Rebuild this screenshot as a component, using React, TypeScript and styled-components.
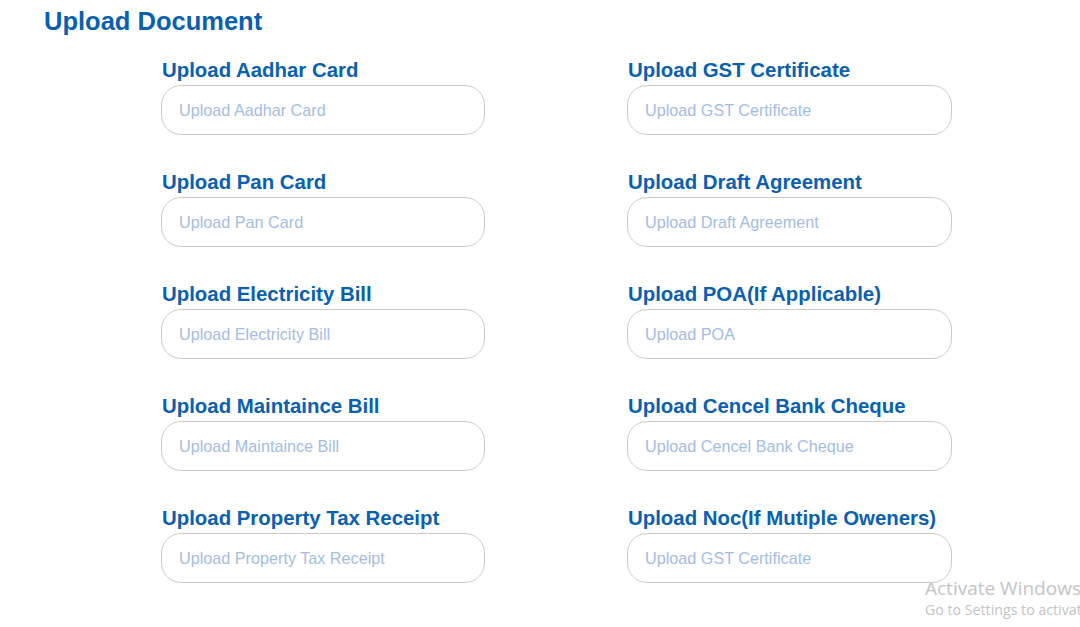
// npm
import React from 'react';
import styled, { createGlobalStyle } from 'styled-components';

// data
const fields = [
	{ label: 'Upload Aadhar Card', placeholder: 'Upload Aadhar Card' },
	{ label: 'Upload GST Certificate', placeholder: 'Upload GST Certificate' },
	{ label: 'Upload Pan Card', placeholder: 'Upload Pan Card' },
	{ label: 'Upload Draft Agreement', placeholder: 'Upload Draft Agreement' },
	{ label: 'Upload Electricity Bill', placeholder: 'Upload Electricity Bill' },
	{ label: 'Upload POA(If Applicable)', placeholder: 'Upload POA' },
	{ label: 'Upload Maintaince Bill', placeholder: 'Upload Maintaince Bill' },
	{ label: 'Upload Cencel Bank Cheque', placeholder: 'Upload Cencel Bank Cheque' },
	{ label: 'Upload Property Tax Receipt', placeholder: 'Upload Property Tax Receipt' },
	{ label: 'Upload Noc(If Mutiple Oweners)', placeholder: 'Upload GST Certificate' },
];

// styles
const GlobalStyle = createGlobalStyle`
	html, body {
		margin: 0;
		padding: 0;
		background: #fff;
		overflow: hidden;
	}

	body {
		font-family: 'Liberation Sans', Arial, sans-serif;
	}
`;

const styles = {
	Page: styled.div`
		position: relative;
		width: 1080px;
		height: 627px;
		padding: 7px 0 0 44px;
		box-sizing: border-box;
		overflow: hidden;
	`,

	Title: styled.h2`
		margin: 0 0 23px;
		color: #0a5faf;
		font-size: 25.5px;
		font-weight: 700;
		line-height: 28px;
	`,

	Grid: styled.div`
		display: grid;
		grid-template-columns: 324px 325px;
		column-gap: 142px;
		row-gap: 35px;
		margin-left: 117px;
	`,

	Field: styled.label`
		display: flex;
		flex-flow: column;
		gap: 3px;
	`,

	Label: styled.span`
		padding-left: 1px;
		color: #0a5faf;
		font-size: 20.4px;
		font-weight: 700;
		line-height: 24px;
		white-space: nowrap;
	`,

	Input: styled.input`
		box-sizing: border-box;
		width: 100%;
		height: 50px;
		padding: 0 17px;
		border: 1px solid #cbcbcb;
		border-radius: 20px;
		background: #fff;
		font-family: 'Liberation Sans', Arial, sans-serif;
		font-size: 16.2px;
		color: #333;
		outline: none;

		&::placeholder {
			color: #a3bde3;
		}
	`,

	Watermark: styled.div`
		position: absolute;
		left: 925px;
		top: 576px;
		color: #c4c4c4;
		font-family: 'Open Sans', 'Noto Sans', sans-serif;
		white-space: nowrap;
		pointer-events: none;
	`,

	WatermarkTitle: styled.div`
		font-size: 19px;
		line-height: 24px;
	`,

	WatermarkText: styled.div`
		font-size: 14.2px;
		line-height: 20px;
	`,
};

// components
const App = () => {
	const { Page, Title, Grid, Field, Label, Input, Watermark, WatermarkTitle, WatermarkText } = styles;

	return (
		<Page>
			<GlobalStyle />

			<Title>Upload Document</Title>

			<Grid>
				{fields.map((f) => (
					<Field key={f.label}>
						<Label>{f.label}</Label>
						<Input placeholder={f.placeholder} />
					</Field>
				))}
			</Grid>

			<Watermark>
				<WatermarkTitle>Activate Windows</WatermarkTitle>
				<WatermarkText>Go to Settings to activate Windows.</WatermarkText>
			</Watermark>
		</Page>
	);
};

export default App;
